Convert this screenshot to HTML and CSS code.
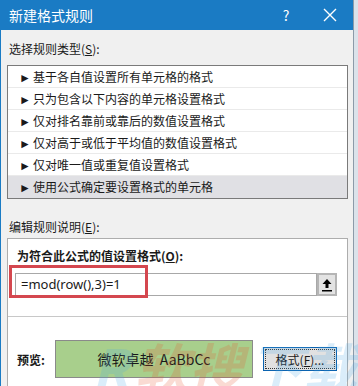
FILE: index.html
```html
<!DOCTYPE html>
<html lang="zh-CN">
<head>
  <meta charset="UTF-8" />
  <meta name="viewport" content="width=device-width, initial-scale=1.0" />
  <title>新建格式规则</title>
  <link rel="stylesheet" href="styles.css">
</head>
<body>
  <div class="dialog">
    <div class="title-bar">
      <span class="title">新建格式规则</span>
      <span class="title-btn help">?</span>
      <span class="title-btn close">
        <svg width="14" height="14" viewBox="0 0 14 14"><path d="M1 1 L13 13 M13 1 L1 13" stroke="#fff" stroke-width="1.4" fill="none"/></svg>
      </span>
    </div>

    <div class="dialog-body">
      <div class="section-label">选择规则类型(<u>S</u>):</div>
      <div class="rule-list">
        <div class="rule-row"><span class="arrow">►</span>基于各自值设置所有单元格的格式</div>
        <div class="rule-row"><span class="arrow">►</span>只为包含以下内容的单元格设置格式</div>
        <div class="rule-row"><span class="arrow">►</span>仅对排名靠前或靠后的数值设置格式</div>
        <div class="rule-row"><span class="arrow">►</span>仅对高于或低于平均值的数值设置格式</div>
        <div class="rule-row"><span class="arrow">►</span>仅对唯一值或重复值设置格式</div>
        <div class="rule-row selected"><span class="arrow">►</span>使用公式确定要设置格式的单元格</div>
      </div>

      <div class="section-label second">编辑规则说明(<u>E</u>):</div>
      <div class="rule-edit">
        <div class="edit-top">
          <div class="formula-label">为符合此公式的值设置格式(<u>O</u>):</div>
          <div class="formula-row">
            <div class="formula-input">=mod(row(),3)=1</div>
            <div class="collapse-btn">
              <svg width="12" height="14" viewBox="0 0 12 14"><path d="M6 1 L1.5 6 H4.5 V10 H7.5 V6 H10.5 Z" fill="#000"/><rect x="1" y="12" width="10" height="1.5" fill="#000"/></svg>
            </div>
          </div>
          <div class="highlight"></div>
        </div>
        <div class="preview-row">
          <span class="preview-label">预览:</span>
          <div class="preview-box">微软卓越&nbsp; AaBbCc</div>
          <div class="format-btn"><span>格式(<u>F</u>)...</span></div>
        </div>
      </div>
    </div>
  </div>
  <div class="watermark"><span class="wm-r">R</span><span class="wm-red">软搜</span><span class="wm-blue">下载</span></div>
</body>
</html>
```

FILE: styles.css
```css
* {
  margin: 0;
  padding: 0;
  box-sizing: border-box;
}

body {
  font-family: "Noto Sans CJK SC", "Noto Sans", sans-serif;
  font-size: 12px;
  color: #1a1a1a;
  background: #dbe2ea;
  width: 358px;
  height: 386px;
  overflow: hidden;
  position: relative;
  display: flex;
}

.dialog {
  width: 354px;
  height: 386px;
  background: #f0f0f0;
  border-left: 1px solid #1a7bc4;
  border-right: 1px solid #8c9aa8;
  display: flex;
  flex-direction: column;
}

.title-bar {
  height: 30px;
  background: #1a7bc4;
  color: #fff;
  display: flex;
  align-items: center;
  padding-left: 8px;
  flex-shrink: 0;
}

.title {
  font-size: 14px;
  flex: 1;
}

.title-btn {
  display: flex;
  align-items: center;
  justify-content: center;
}

.help {
  font-size: 14px;
  width: 20px;
  margin-right: 24px;
}

.close {
  width: 20px;
  margin-right: 13px;
}

.dialog-body {
  padding: 0 5px 0 6px;
}

.section-label {
  height: 17px;
  line-height: 17px;
  margin: 10px 0 8px 2px;
}

.section-label.second {
  margin-top: 19px;
  margin-bottom: 3px;
}

.rule-list {
  background: #fff;
  border: 1px solid #7a7a7a;
  width: 341px;
}

.rule-row {
  height: 22px;
  line-height: 21px;
  padding-left: 11px;
  border-bottom: 1px solid #eaeaea;
  white-space: nowrap;
}

.rule-row:last-child {
  border-bottom: none;
}

.rule-row.selected {
  background: #e0e0e4;
}

.arrow {
  font-size: 12px;
  display: inline-block;
  width: 14px;
}

.rule-edit {
  background: #fff;
  border: 1px solid #adadad;
  width: 341px;
  height: 150px;
}

.edit-top {
  position: relative;
  padding: 8px 10px 0 7px;
  height: 78px;
  border-bottom: 1px solid #c8c8c8;
}

.formula-label {
  font-weight: bold;
  line-height: 17px;
  padding-left: 2px;
}

.formula-row {
  display: flex;
  margin-top: 9px;
}

.formula-input {
  width: 303px;
  height: 23px;
  border: 1px solid #a8a8a8;
  padding-left: 5px;
  line-height: 21px;
  font-size: 13px;
  font-family: "Noto Sans", sans-serif;
}

.collapse-btn {
  width: 20px;
  height: 23px;
  background: #e3e3e3;
  border: 2px solid #b5b5b5;
  display: flex;
  align-items: center;
  justify-content: center;
}

.highlight {
  position: absolute;
  left: 1px;
  top: 26px;
  width: 139px;
  height: 33px;
  border: 3px solid #d4474f;
}

.preview-row {
  display: flex;
  align-items: center;
  padding: 23px 0 0 9px;
}

.preview-label {
  font-weight: bold;
  width: 38px;
}

.preview-box {
  width: 198px;
  height: 38px;
  background: #a8cf8c;
  border: 1px solid #8a8a8a;
  display: flex;
  align-items: center;
  justify-content: center;
  font-size: 14px;
}

.format-btn {
  margin-left: 10px;
  width: 74px;
  height: 24px;
  background: #e1e1e1;
  border: 1px solid #0b63b0;
  padding: 1px;
  display: flex;
}

.format-btn span {
  flex: 1;
  border: 1px dotted #333;
  display: flex;
  align-items: center;
  justify-content: center;
}

.watermark {
  position: absolute;
  left: 92px;
  top: 326px;
  font-size: 54px;
  font-weight: bold;
  font-style: italic;
  white-space: nowrap;
  opacity: 0.2;
  pointer-events: none;
}

.wm-r {
  color: #4aa8e8;
  margin-right: 6px;
}

.wm-red {
  color: #e8502a;
}

.wm-blue {
  color: #4aa8e8;
  margin-left: 6px;
}
```
